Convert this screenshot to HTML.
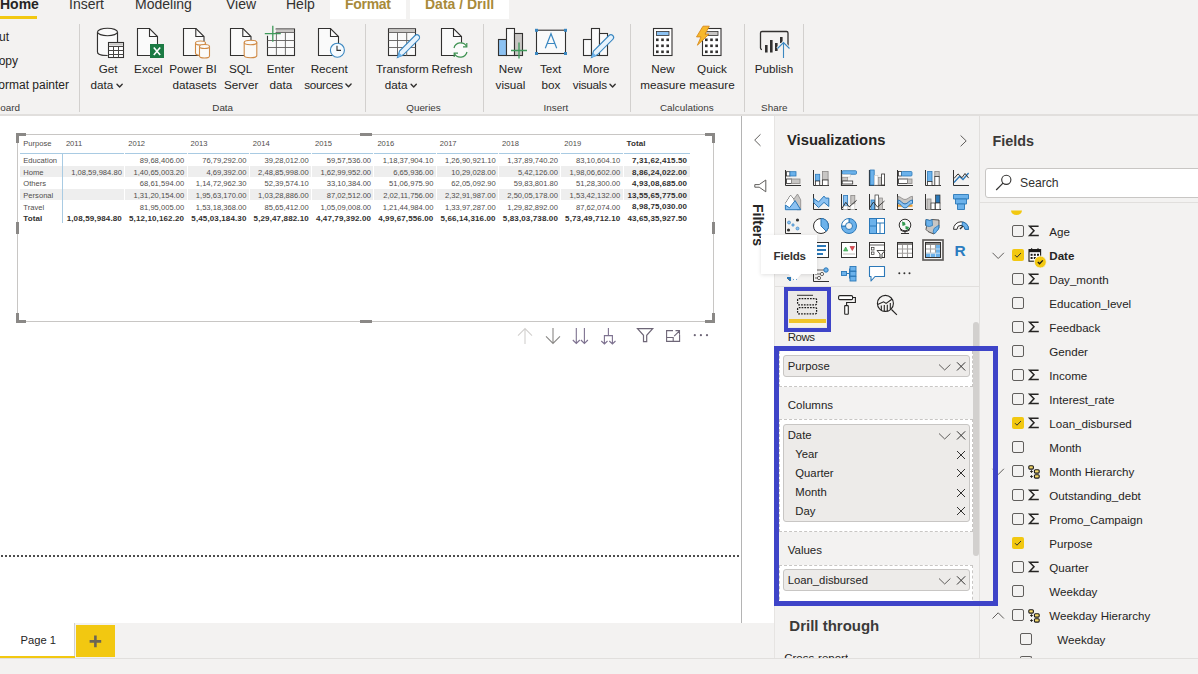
<!DOCTYPE html>
<html><head><meta charset="utf-8">
<style>
*{margin:0;padding:0;box-sizing:border-box}
html,body{width:1198px;height:674px;overflow:hidden}
body{background:#f3f2f1;font-family:"Liberation Sans",sans-serif;color:#252423;position:relative}
.a{position:absolute;white-space:nowrap;line-height:1}
.tab{font-size:14px;top:-2.9px;color:#323130}
.rl{font-size:11.7px;color:#252423;text-align:center}
.gl{font-size:9.9px;color:#3b3a39;text-align:center}
.sep{position:absolute;width:1px;background:#d2d0ce;top:24px;height:88px}
svg{position:absolute;overflow:visible}
.tt{font-size:7.6px;color:#4f4d4b}
.tb{font-size:8px;font-weight:bold;color:#323130;letter-spacing:0.13px}
.fl{font-size:11.6px;color:#252423}
.pl{font-size:11.3px;color:#252423}
.sl{font-size:11.5px;color:#252423}
</style></head><body>

<!-- ===== Tab bar ===== -->
<div class="a" style="left:330px;top:0;width:76px;height:19px;background:#fff"></div>
<div class="a" style="left:410px;top:0;width:99px;height:19px;background:#fff"></div>
<div class="a tab" style="left:0;font-weight:bold;color:#252423">Home</div>
<div class="a" style="left:0;top:16px;width:37px;height:3px;background:#f2c811"></div>
<div class="a tab" style="left:69px">Insert</div>
<div class="a tab" style="left:135px">Modeling</div>
<div class="a tab" style="left:226px">View</div>
<div class="a tab" style="left:286px">Help</div>
<div class="a tab" style="left:345px;color:#a88a3a;font-weight:bold;letter-spacing:-0.3px">Format</div>
<div class="a tab" style="left:425px;color:#a88a3a;font-weight:bold">Data / Drill</div>

<!-- ===== Ribbon ===== -->
<div class="a" style="left:0;top:114px;width:1198px;height:2px;background:#e1dfdd"></div>
<div class="sep" style="left:79px"></div>
<div class="sep" style="left:365px"></div>
<div class="sep" style="left:483px"></div>
<div class="sep" style="left:630px"></div>
<div class="sep" style="left:744px"></div>
<div class="sep" style="left:803px"></div>


<!-- ribbon labels -->
<div class="a rl" style="left:-91px;width:100px;top:31px;text-align:right;font-size:12px">ut</div>
<div class="a rl" style="left:-82px;width:100px;top:54.5px;text-align:right;font-size:12px">opy</div>
<div class="a rl" style="left:-31px;width:100px;top:78.5px;text-align:right;font-size:12px">ormat painter</div>
<div class="a gl" style="left:-80px;width:100px;top:102.9px;text-align:right">oard</div>

<div class="a rl" style="left:58.2px;width:100px;top:63px">Get</div>
<div class="a rl" style="left:0;width:113.3px;top:78.8px;text-align:right">data</div>
<div class="a rl" style="left:98.4px;width:100px;top:63px">Excel</div>
<div class="a rl" style="left:143px;width:100px;top:63px">Power BI</div>
<div class="a rl" style="left:144.5px;width:100px;top:78.8px">datasets</div>
<div class="a rl" style="left:190.7px;width:100px;top:63px">SQL</div>
<div class="a rl" style="left:191.1px;width:100px;top:78.8px">Server</div>
<div class="a rl" style="left:230.8px;width:100px;top:63px">Enter</div>
<div class="a rl" style="left:230.8px;width:100px;top:78.8px">data</div>
<div class="a rl" style="left:279.2px;width:100px;top:63px">Recent</div>
<div class="a rl" style="left:242.8px;width:100px;top:78.8px;text-align:right;letter-spacing:-0.35px">sources</div>
<div class="a gl" style="left:172.7px;width:100px;top:102.7px">Data</div>

<div class="a rl" style="left:352.3px;width:100px;top:63px">Transform</div>
<div class="a rl" style="left:307.5px;width:100px;top:78.8px;text-align:right">data</div>
<div class="a rl" style="left:402px;width:100px;top:63px">Refresh</div>
<div class="a gl" style="left:373.5px;width:100px;top:102.7px">Queries</div>

<div class="a rl" style="left:460.5px;width:100px;top:63px">New</div>
<div class="a rl" style="left:460.5px;width:100px;top:78.8px">visual</div>
<div class="a rl" style="left:500.6px;width:100px;top:63px">Text</div>
<div class="a rl" style="left:500.9px;width:100px;top:78.8px">box</div>
<div class="a rl" style="left:546.3px;width:100px;top:63px">More</div>
<div class="a rl" style="left:506.8px;width:100px;top:78.8px;text-align:right;letter-spacing:-0.25px">visuals</div>
<div class="a gl" style="left:505.9px;width:100px;top:102.7px">Insert</div>

<div class="a rl" style="left:613px;width:100px;top:63px">New</div>
<div class="a rl" style="left:613px;width:100px;top:78.8px">measure</div>
<div class="a rl" style="left:662px;width:100px;top:63px">Quick</div>
<div class="a rl" style="left:662px;width:100px;top:78.8px">measure</div>
<div class="a gl" style="left:636.9px;width:100px;top:102.7px">Calculations</div>

<div class="a rl" style="left:724px;width:100px;top:63px">Publish</div>
<div class="a gl" style="left:724.3px;width:100px;top:102.7px">Share</div>

<svg width="1198" height="120" style="left:0;top:0" viewBox="0 0 1198 120">
<g fill="none" stroke="#323130" stroke-width="1.4" stroke-linecap="round" stroke-linejoin="round">
<path d="M117 84.3l2.6 2.7 2.6-2.7"/>
<path d="M411.1 84.3l2.6 2.7 2.6-2.7"/>
<path d="M345.9 84.1l2.6 2.7 2.6-2.7"/>
<path d="M610 84.3l2.6 2.7 2.6-2.7"/>
</g>
<!-- Get data -->
<g stroke="#323130" stroke-width="1.1">
<path d="M97.5 32v20c0 2.5 4 3.5 10 3.5M117.5 32v10" fill="none"/>
<path d="M97.5 32v20c0 2.3 4.5 3.5 10.5 3.5h0V42h9.5V32z" fill="#fafafa" stroke="none"/>
<path d="M97.5 32v20c0 2.5 4 3.5 10 3.5M117.5 32v10" fill="none"/>
<ellipse cx="107.5" cy="32" rx="10" ry="3.7" fill="#fafafa"/>
<rect x="108.5" y="42.5" width="15" height="15" fill="#fff"/>
<rect x="109.2" y="43.2" width="13.6" height="2.3" fill="#c8c6c4" stroke="none"/>
<path d="M108.5 46.5h15M108.5 50.5h15M108.5 54.5h15M113.5 46v11.5M118.5 46v11.5" stroke="#484644" stroke-width="1"/>
</g>
<!-- Excel -->
<path d="M137.5 28.5h12l8 8v19h-20z" fill="#fafafa" stroke="#323130" stroke-width="1.1"/>
<path d="M149.5 28.5v8h8" fill="none" stroke="#323130" stroke-width="1.1"/>
<rect x="150" y="44" width="14" height="14" fill="#1b7a43"/>
<path d="M153.8 47.5l6.4 7.5M160.2 47.5l-6.4 7.5" stroke="#fff" stroke-width="1.6"/>
<!-- Power BI datasets -->
<path d="M183.5 28.5h12.5l8 8v19h-20.5z" fill="#fafafa" stroke="#323130" stroke-width="1.1"/>
<path d="M195.8 28.5v8h8" fill="none" stroke="#323130" stroke-width="1.1"/>
<g stroke="#d08a45" stroke-width="1.1" fill="#fbfaf8">
<path d="M195.5 43v10c0 1.5 2.3 2.3 5 2.3s5-.8 5-2.3V43"/>
<ellipse cx="200.5" cy="43" rx="5" ry="2"/>
<path d="M199.5 46.5v9.5c0 1.5 2.3 2 5 2s5-.5 5-2v-9.5"/>
<ellipse cx="204.5" cy="46.5" rx="5" ry="2"/>
</g>
<!-- SQL -->
<path d="M230.5 28.5h12.5l8 8v19h-20.5z" fill="#fafafa" stroke="#323130" stroke-width="1.1"/>
<path d="M242.8 28.5v8h8" fill="none" stroke="#323130" stroke-width="1.1"/>
<g stroke="#d08a45" stroke-width="1.1" fill="#fbfaf8">
<path d="M244.2 42.5v13c0 1.5 2.9 2.2 6.3 2.2s6.3-.7 6.3-2.2v-13"/>
<ellipse cx="250.5" cy="42.5" rx="6.3" ry="2.2"/>
</g>
<!-- Enter data -->
<rect x="267.5" y="29" width="27" height="26.5" fill="#fafafa" stroke="#323130" stroke-width="1.1"/>
<rect x="276" y="29.6" width="18" height="2.6" fill="#c8c6c4"/>
<path d="M267.5 32.5h27M267.5 40.5h27M267.5 47.5h27M276.4 32.5v23M285.4 32.5v23" stroke="#605e5c" stroke-width="0.9"/>
<rect x="264" y="25" width="11.6" height="10.8" fill="#f3f2f1"/><path d="M264.8 33.6h16M272.8 25.8v16" stroke="#3e9a5a" stroke-width="1.3"/>
<!-- Recent -->
<path d="M318.5 28.5h12l8 8v19h-20z" fill="#fafafa" stroke="#323130" stroke-width="1.1"/>
<path d="M330.5 28.5v8h8" fill="none" stroke="#323130" stroke-width="1.1"/>
<circle cx="337.4" cy="50.2" r="7" fill="#f6fbff" stroke="#3a87c0" stroke-width="1.1"/>
<path d="M337 45.8v4.6h4" fill="none" stroke="#323130" stroke-width="1.1"/>
<!-- Transform -->
<rect x="388.5" y="28.8" width="27" height="26.7" fill="#fafafa" stroke="#323130" stroke-width="1.1"/>
<rect x="389" y="29.3" width="26" height="3.2" fill="#c8c6c4"/>
<path d="M388.5 32.5h27M388.5 40.5h27M388.5 47.5h27M397.5 32.8v23M406.7 32.8v23" stroke="#605e5c" stroke-width="0.9"/>
<path d="M397.5 57.5l2-6.5 15.5-15.5c1-1 2.8-1 3.8 0s1 2.8 0 3.8L403.3 54.8z" fill="#e6f3fd" stroke="#3a87c0" stroke-width="1.1"/>
<path d="M397.5 57.5l1.5-5 3.5 3.5z" fill="#6cb2ea"/>
<!-- Refresh -->
<path d="M441.5 28.5h12l8 8v19h-20z" fill="#fafafa" stroke="#323130" stroke-width="1.1"/>
<path d="M453.5 28.5v8h8" fill="none" stroke="#323130" stroke-width="1.1"/>
<circle cx="460.5" cy="50" r="7.5" fill="#fafafa" stroke="none"/>
<path d="M454 48a6.8 6.8 0 0 1 12.6-1.5M467 52a6.8 6.8 0 0 1-12.6 1.5" fill="none" stroke="#3c9150" stroke-width="1.2"/>
<path d="M466.8 43v3.8h-3.8M454.2 57v-3.8h3.8" fill="none" stroke="#3c9150" stroke-width="1.2"/>
<!-- New visual -->
<rect x="498.5" y="39.5" width="8" height="16" fill="#8cc2f2" stroke="#323130" stroke-width="1.1"/>
<rect x="506.5" y="28.5" width="8" height="27" fill="#fafafa" stroke="#323130" stroke-width="1.1"/>
<rect x="514.5" y="33.5" width="8" height="22" fill="#c8c6c4" stroke="#323130" stroke-width="1.1"/>
<rect x="512" y="42" width="14" height="16" fill="#f3f2f1" opacity="0"/>
<path d="M511 50.5h16M519 42.5v16" stroke="#3e9a5a" stroke-width="1.3"/>
<!-- Text box -->
<rect x="536.5" y="30.2" width="29" height="23.3" fill="#fafafa" stroke="#323130" stroke-width="1.1"/>
<g fill="#3a87c0"><rect x="535" y="28.8" width="3" height="3"/><rect x="564" y="28.8" width="3" height="3"/><rect x="535" y="52" width="3" height="3"/><rect x="564" y="52" width="3" height="3"/></g>
<path d="M545.3 48.3l5.7-14.6 5.7 14.6M547.3 43.5h7.4" fill="none" stroke="#3a87c0" stroke-width="1.2"/>
<!-- More visuals -->
<rect x="583.5" y="39.5" width="8" height="16" fill="#fafafa" stroke="#323130" stroke-width="1.1"/>
<rect x="591.5" y="28.5" width="8" height="27" fill="#fafafa" stroke="#323130" stroke-width="1.1"/>
<rect x="599.5" y="33.5" width="8" height="22" fill="#fafafa" stroke="#323130" stroke-width="1.1"/>
<path d="M591.5 57.5l2-6.5 15.5-15.5c1-1 2.8-1 3.8 0s1 2.8 0 3.8L597.3 54.8z" fill="#e6f3fd" stroke="#3a87c0" stroke-width="1.1"/>
<path d="M591.5 57.5l1.5-5 3.5 3.5z" fill="#6cb2ea"/>
<!-- New measure -->
<rect x="653.5" y="28.5" width="18.5" height="27" fill="#fff" stroke="#323130" stroke-width="1.1"/>
<rect x="656.5" y="31.5" width="12.5" height="4" fill="#8cc2f2" stroke="#323130" stroke-width="0.8"/>
<g fill="#323130">
<rect x="656" y="38.5" width="2.6" height="2.6"/><rect x="661.2" y="38.5" width="2.6" height="2.6"/><rect x="666.4" y="38.5" width="2.6" height="2.6"/>
<rect x="656" y="44.5" width="2.6" height="2.6"/><rect x="661.2" y="44.5" width="2.6" height="2.6"/><rect x="666.4" y="44.5" width="2.6" height="2.6"/>
<rect x="656" y="50.5" width="2.6" height="2.6"/><rect x="661.2" y="50.5" width="2.6" height="2.6"/><rect x="666.4" y="50.5" width="2.6" height="2.6"/>
</g>
<!-- Quick measure -->
<rect x="702.5" y="28.5" width="18.5" height="27" fill="#fff" stroke="#323130" stroke-width="1.1"/>
<rect x="705.5" y="31.5" width="12.5" height="4" fill="#c8c6c4" stroke="#323130" stroke-width="0.8"/>
<g fill="#323130">
<rect x="705" y="38.5" width="2.6" height="2.6"/><rect x="710.2" y="38.5" width="2.6" height="2.6"/><rect x="715.4" y="38.5" width="2.6" height="2.6"/>
<rect x="705" y="44.5" width="2.6" height="2.6"/><rect x="710.2" y="44.5" width="2.6" height="2.6"/><rect x="715.4" y="44.5" width="2.6" height="2.6"/>
<rect x="705" y="50.5" width="2.6" height="2.6"/><rect x="710.2" y="50.5" width="2.6" height="2.6"/><rect x="715.4" y="50.5" width="2.6" height="2.6"/>
</g>
<path d="M703 26.2h6.3l-4.3 8h4l-11.6 11 3.6-8.3h-4.5z" fill="#f7b82a" stroke="#d88a1a" stroke-width="0.9" stroke-linejoin="round"/>
<!-- Publish -->
<path d="M762 49.5c-1 0-1.5-.5-1.5-1.5V33c0-1 .5-1.5 1.5-1.5h24.5c1 0 1.5.5 1.5 1.5v15" fill="none" stroke="#323130" stroke-width="1.3"/>
<g fill="#323130"><rect x="765" y="45" width="2.6" height="7.5"/><rect x="770" y="40" width="2.6" height="12.5"/><rect x="775" y="43" width="2.6" height="8"/><rect x="780" y="37" width="2.6" height="6"/></g>
<path d="M783.5 58V42.5M777.5 48.5l6-6 6 6" fill="none" stroke="#f3f2f1" stroke-width="3"/>
<path d="M783.5 58V42.5M777.5 48.5l6-6 6 6" fill="none" stroke="#3a87c0" stroke-width="1.1"/>
</svg>


<!-- ===== Canvas ===== -->
<div class="a" style="left:0;top:116px;width:741px;height:507px;background:#fff"></div>
<div class="a" style="left:741px;top:116px;width:1px;height:507px;background:#c8c6c4"></div>
<div class="a" style="left:742px;top:116px;width:32px;height:507px;background:#fff"></div>
<div class="a" style="left:0;top:555px;width:739px;height:2px;border-top:2px dotted #444"></div>


<!-- ===== Canvas ===== -->
<div class="a" style="left:0;top:116px;width:741px;height:507px;background:#fff"></div>
<div class="a" style="left:741px;top:116px;width:1px;height:507px;background:#b4b4b4"></div>
<div class="a" style="left:742px;top:116px;width:32px;height:507px;background:#fff"></div>
<div class="a" style="left:1px;top:555px;width:738px;height:2px;background:repeating-linear-gradient(90deg,#4d4d4d 0 2px,transparent 2px 4px)"></div>
<!-- ===== table visual ===== -->
<div class="a" style="left:20px;top:166px;width:670px;height:11px;background:#eeeeee"></div>
<div class="a" style="left:62px;top:166px;width:1px;height:11px;background:#fff"></div>
<div class="a" style="left:124px;top:166px;width:1px;height:11px;background:#fff"></div>
<div class="a" style="left:187px;top:166px;width:1px;height:11px;background:#fff"></div>
<div class="a" style="left:249px;top:166px;width:1px;height:11px;background:#fff"></div>
<div class="a" style="left:311px;top:166px;width:1px;height:11px;background:#fff"></div>
<div class="a" style="left:373px;top:166px;width:1px;height:11px;background:#fff"></div>
<div class="a" style="left:436px;top:166px;width:1px;height:11px;background:#fff"></div>
<div class="a" style="left:498px;top:166px;width:1px;height:11px;background:#fff"></div>
<div class="a" style="left:560px;top:166px;width:1px;height:11px;background:#fff"></div>
<div class="a" style="left:623px;top:166px;width:1px;height:11px;background:#fff"></div>
<div class="a" style="left:20px;top:189px;width:670px;height:11px;background:#eeeeee"></div>
<div class="a" style="left:62px;top:189px;width:1px;height:11px;background:#fff"></div>
<div class="a" style="left:124px;top:189px;width:1px;height:11px;background:#fff"></div>
<div class="a" style="left:187px;top:189px;width:1px;height:11px;background:#fff"></div>
<div class="a" style="left:249px;top:189px;width:1px;height:11px;background:#fff"></div>
<div class="a" style="left:311px;top:189px;width:1px;height:11px;background:#fff"></div>
<div class="a" style="left:373px;top:189px;width:1px;height:11px;background:#fff"></div>
<div class="a" style="left:436px;top:189px;width:1px;height:11px;background:#fff"></div>
<div class="a" style="left:498px;top:189px;width:1px;height:11px;background:#fff"></div>
<div class="a" style="left:560px;top:189px;width:1px;height:11px;background:#fff"></div>
<div class="a" style="left:623px;top:189px;width:1px;height:11px;background:#fff"></div>
<div class="a" style="left:20px;top:153px;width:670px;height:1px;background:#a9cbe3"></div>
<div class="a" style="left:124px;top:153px;width:1px;height:1px;background:#fff"></div>
<div class="a" style="left:187px;top:153px;width:1px;height:1px;background:#fff"></div>
<div class="a" style="left:249px;top:153px;width:1px;height:1px;background:#fff"></div>
<div class="a" style="left:311px;top:153px;width:1px;height:1px;background:#fff"></div>
<div class="a" style="left:373px;top:153px;width:1px;height:1px;background:#fff"></div>
<div class="a" style="left:436px;top:153px;width:1px;height:1px;background:#fff"></div>
<div class="a" style="left:498px;top:153px;width:1px;height:1px;background:#fff"></div>
<div class="a" style="left:560px;top:153px;width:1px;height:1px;background:#fff"></div>
<div class="a" style="left:623px;top:153px;width:1px;height:1px;background:#fff"></div>
<div class="a" style="left:62px;top:153px;width:1px;height:70px;background:#a9cbe3"></div>
<div class="a tt" style="left:23.3px;top:140.07px">Purpose</div>
<div class="a tt" style="left:65.9px;top:140.07px">2011</div>
<div class="a tt" style="left:128.2px;top:140.07px">2012</div>
<div class="a tt" style="left:190.5px;top:140.07px">2013</div>
<div class="a tt" style="left:252.8px;top:140.07px">2014</div>
<div class="a tt" style="left:315.1px;top:140.07px">2015</div>
<div class="a tt" style="left:377.4px;top:140.07px">2016</div>
<div class="a tt" style="left:439.7px;top:140.07px">2017</div>
<div class="a tt" style="left:502.0px;top:140.07px">2018</div>
<div class="a tt" style="left:564.3px;top:140.07px">2019</div>
<div class="a tb" style="left:626.5px;top:139.73px">Total</div>
<div class="a tt" style="left:23.3px;top:157.17px">Education</div>
<div class="a tt" style="left:84.2px;width:100px;text-align:right;top:157.17px">89,68,406.00</div>
<div class="a tt" style="left:146.5px;width:100px;text-align:right;top:157.17px">76,79,292.00</div>
<div class="a tt" style="left:208.8px;width:100px;text-align:right;top:157.17px">39,28,012.00</div>
<div class="a tt" style="left:271.1px;width:100px;text-align:right;top:157.17px">59,57,536.00</div>
<div class="a tt" style="left:333.4px;width:100px;text-align:right;top:157.17px">1,18,37,904.10</div>
<div class="a tt" style="left:395.7px;width:100px;text-align:right;top:157.17px">1,26,90,921.10</div>
<div class="a tt" style="left:458.0px;width:100px;text-align:right;top:157.17px">1,37,89,740.20</div>
<div class="a tt" style="left:520.3px;width:100px;text-align:right;top:157.17px">83,10,604.10</div>
<div class="a tb" style="left:587.2px;width:100px;text-align:right;top:156.83px">7,31,62,415.50</div>
<div class="a tt" style="left:23.3px;top:168.97px">Home</div>
<div class="a tt" style="left:21.9px;width:100px;text-align:right;top:168.97px">1,08,59,984.80</div>
<div class="a tt" style="left:84.2px;width:100px;text-align:right;top:168.97px">1,40,65,003.20</div>
<div class="a tt" style="left:146.5px;width:100px;text-align:right;top:168.97px">4,69,392.00</div>
<div class="a tt" style="left:208.8px;width:100px;text-align:right;top:168.97px">2,48,85,998.00</div>
<div class="a tt" style="left:271.1px;width:100px;text-align:right;top:168.97px">1,62,99,952.00</div>
<div class="a tt" style="left:333.4px;width:100px;text-align:right;top:168.97px">6,65,936.00</div>
<div class="a tt" style="left:395.7px;width:100px;text-align:right;top:168.97px">10,29,028.00</div>
<div class="a tt" style="left:458.0px;width:100px;text-align:right;top:168.97px">5,42,126.00</div>
<div class="a tt" style="left:520.3px;width:100px;text-align:right;top:168.97px">1,98,06,602.00</div>
<div class="a tb" style="left:587.2px;width:100px;text-align:right;top:168.63px">8,86,24,022.00</div>
<div class="a tt" style="left:23.3px;top:179.97px">Others</div>
<div class="a tt" style="left:84.2px;width:100px;text-align:right;top:179.97px">68,61,594.00</div>
<div class="a tt" style="left:146.5px;width:100px;text-align:right;top:179.97px">1,14,72,962.30</div>
<div class="a tt" style="left:208.8px;width:100px;text-align:right;top:179.97px">52,39,574.10</div>
<div class="a tt" style="left:271.1px;width:100px;text-align:right;top:179.97px">33,10,384.00</div>
<div class="a tt" style="left:333.4px;width:100px;text-align:right;top:179.97px">51,06,975.90</div>
<div class="a tt" style="left:395.7px;width:100px;text-align:right;top:179.97px">62,05,092.90</div>
<div class="a tt" style="left:458.0px;width:100px;text-align:right;top:179.97px">59,83,801.80</div>
<div class="a tt" style="left:520.3px;width:100px;text-align:right;top:179.97px">51,28,300.00</div>
<div class="a tb" style="left:587.2px;width:100px;text-align:right;top:179.63px">4,93,08,685.00</div>
<div class="a tt" style="left:23.3px;top:191.87px">Personal</div>
<div class="a tt" style="left:84.2px;width:100px;text-align:right;top:191.87px">1,31,20,154.00</div>
<div class="a tt" style="left:146.5px;width:100px;text-align:right;top:191.87px">1,95,63,170.00</div>
<div class="a tt" style="left:208.8px;width:100px;text-align:right;top:191.87px">1,03,28,886.00</div>
<div class="a tt" style="left:271.1px;width:100px;text-align:right;top:191.87px">87,02,512.00</div>
<div class="a tt" style="left:333.4px;width:100px;text-align:right;top:191.87px">2,02,11,756.00</div>
<div class="a tt" style="left:395.7px;width:100px;text-align:right;top:191.87px">2,32,91,987.00</div>
<div class="a tt" style="left:458.0px;width:100px;text-align:right;top:191.87px">2,50,05,178.00</div>
<div class="a tt" style="left:520.3px;width:100px;text-align:right;top:191.87px">1,53,42,132.00</div>
<div class="a tb" style="left:587.2px;width:100px;text-align:right;top:191.53px">13,55,65,775.00</div>
<div class="a tt" style="left:23.3px;top:203.77px">Travel</div>
<div class="a tt" style="left:84.2px;width:100px;text-align:right;top:203.77px">81,95,005.00</div>
<div class="a tt" style="left:146.5px;width:100px;text-align:right;top:203.77px">1,53,18,368.00</div>
<div class="a tt" style="left:208.8px;width:100px;text-align:right;top:203.77px">85,65,412.00</div>
<div class="a tt" style="left:271.1px;width:100px;text-align:right;top:203.77px">1,05,09,008.00</div>
<div class="a tt" style="left:333.4px;width:100px;text-align:right;top:203.77px">1,21,44,984.00</div>
<div class="a tt" style="left:395.7px;width:100px;text-align:right;top:203.77px">1,33,97,287.00</div>
<div class="a tt" style="left:458.0px;width:100px;text-align:right;top:203.77px">1,29,82,892.00</div>
<div class="a tt" style="left:520.3px;width:100px;text-align:right;top:203.77px">87,62,074.00</div>
<div class="a tb" style="left:587.2px;width:100px;text-align:right;top:203.43px">8,98,75,030.00</div>
<div class="a tb" style="left:23.3px;top:215.33px">Total</div>
<div class="a tb" style="left:21.9px;width:100px;text-align:right;top:215.33px">1,08,59,984.80</div>
<div class="a tb" style="left:84.2px;width:100px;text-align:right;top:215.33px">5,12,10,162.20</div>
<div class="a tb" style="left:146.5px;width:100px;text-align:right;top:215.33px">5,45,03,184.30</div>
<div class="a tb" style="left:208.8px;width:100px;text-align:right;top:215.33px">5,29,47,882.10</div>
<div class="a tb" style="left:271.1px;width:100px;text-align:right;top:215.33px">4,47,79,392.00</div>
<div class="a tb" style="left:333.4px;width:100px;text-align:right;top:215.33px">4,99,67,556.00</div>
<div class="a tb" style="left:395.7px;width:100px;text-align:right;top:215.33px">5,66,14,316.00</div>
<div class="a tb" style="left:458.0px;width:100px;text-align:right;top:215.33px">5,83,03,738.00</div>
<div class="a tb" style="left:520.3px;width:100px;text-align:right;top:215.33px">5,73,49,712.10</div>
<div class="a tb" style="left:587.2px;width:100px;text-align:right;top:215.33px">43,65,35,927.50</div>
<div class="a" style="left:17px;top:134px;width:697px;height:188px;border:1px solid #c8c6c4"></div>
<div class="a" style="left:16px;top:133px;width:10px;height:3px;background:#8a8886"></div>
<div class="a" style="left:16px;top:133px;width:3px;height:10px;background:#8a8886"></div>
<div class="a" style="left:705px;top:133px;width:10px;height:3px;background:#8a8886"></div>
<div class="a" style="left:712px;top:133px;width:3px;height:10px;background:#8a8886"></div>
<div class="a" style="left:16px;top:313px;width:3px;height:10px;background:#8a8886"></div>
<div class="a" style="left:16px;top:320px;width:10px;height:3px;background:#8a8886"></div>
<div class="a" style="left:705px;top:320px;width:10px;height:3px;background:#8a8886"></div>
<div class="a" style="left:712px;top:313px;width:3px;height:10px;background:#8a8886"></div>
<div class="a" style="left:360px;top:133px;width:12px;height:3px;background:#8a8886"></div>
<div class="a" style="left:360px;top:320px;width:12px;height:3px;background:#8a8886"></div>
<div class="a" style="left:16px;top:222px;width:3px;height:12px;background:#8a8886"></div>
<div class="a" style="left:712px;top:222px;width:3px;height:12px;background:#8a8886"></div>
<svg width="1198" height="674" style="left:0;top:0" viewBox="0 0 1198 674">
<g fill="none" stroke-width="1.1">
<path d="M525 344V328.6M518 335.6l7-7 7 7" stroke="#d2d0ce"/>
<path d="M553 328v15.4M546 336.4l7 7 7-7" stroke="#8a8886"/>
<path d="M576.3 328v15.4M584.4 328v15.4M572.8 340l3.5 3.5 3.5-3.5M580.9 340l3.5 3.5 3.5-3.5" stroke="#7e7290"/>
<path d="M608.4 328v7.6M604.4 344v-8.4h8v8.4M601.3 341l3.1 3 3.1-3M609.3 341l3.1 3 3.1-3" stroke="#7e7290"/>
<path d="M637.5 328.7h15.2l-6 6.6v6.3h-3.2v-6.3z" stroke="#6e6677" stroke-width="1.2"/>
<path d="M673 330.6h-6.4v10.8h13v-6.6M666.6 337.5h6.6v4M674.2 336.2l5.3-5.3M675.5 330.6h4v4" stroke="#6e6677" stroke-width="1.1"/>
</g>
<g fill="#6e6677"><circle cx="694.8" cy="335.2" r="1.1"/><circle cx="700.9" cy="335.2" r="1.1"/><circle cx="707" cy="335.2" r="1.1"/></g>
</svg>
<!-- ===== Panes ===== -->
<div class="a" style="left:774px;top:116px;width:1px;height:542px;background:#e6e4e2"></div>
<div class="a" style="left:979px;top:116px;width:1px;height:542px;background:#e1dfdd"></div>
<svg width="30" height="80" style="left:745px;top:125px" viewBox="745 125 30 80"><path d="M760.5 134.3l-5.8 5.8 5.8 5.8" fill="none" stroke="#605e5c" stroke-width="1"/><path d="M765.8 180v11.8l-6.6-4.6h-4.4v-2.6h4.4z" fill="none" stroke="#605e5c" stroke-width="1" stroke-linejoin="round"/></svg>
<div class="a" style="left:764.6px;top:203.6px;font-size:14px;font-weight:bold;color:#252423;transform-origin:0 0;transform:rotate(90deg)">Filters</div>
<div class="a" style="left:787px;top:133.47px;font-size:14.8px;font-weight:bold;color:#252423">Visualizations</div>
<svg width="10" height="14" style="left:958px;top:134px" viewBox="958 134 10 14"><path d="M960.6 135.5l5.6 5.4-5.6 5.4" fill="none" stroke="#605e5c" stroke-width="1"/></svg>
<svg width="1198" height="674" style="left:0;top:0" viewBox="0 0 1198 674">
<g transform="translate(785,170)"><path d="M.5 0v15.5H16" fill="none" stroke="#323130"/><rect x="1.5" y="1.7" width="3.5" height="4.3" fill="#fff" stroke="#323130" stroke-width=".8"/><rect x="5" y="1.7" width="6" height="4.3" fill="#6cb2eb" stroke="#2b78b8" stroke-width=".8"/><rect x="1.5" y="9" width="5" height="4.5" fill="#fff" stroke="#323130" stroke-width=".8"/><rect x="6.5" y="9" width="8.5" height="4.5" fill="#c8c6c4" stroke="#8a8886" stroke-width=".8"/></g>
<g transform="translate(813,170)"><path d="M.5 0v15.5H16" fill="none" stroke="#323130"/><rect x="2.5" y="4.3" width="4.2" height="6.7" fill="#6cb2eb" stroke="#2b78b8" stroke-width=".8"/><rect x="2.5" y="11" width="4.2" height="4.5" fill="#fff" stroke="#323130" stroke-width=".8"/><rect x="9.4" y="1.5" width="5.7" height="8.5" fill="#c8c6c4" stroke="#8a8886" stroke-width=".8"/><rect x="9.4" y="10" width="5.7" height="5.5" fill="#fff" stroke="#323130" stroke-width=".8"/></g>
<g transform="translate(841,170)"><path d="M.5 0v15.5H16" fill="none" stroke="#323130" stroke-width="1.2"/><rect x="1.2" y=".7" width="14.3" height="3.6" rx="1" fill="#6cb2eb" stroke="#2b78b8" stroke-width=".8"/><rect x="1.2" y="4.5" width="8" height="2.5" fill="#fff" stroke="#c8c6c4" stroke-width=".6"/><rect x="1.2" y="7.5" width="5.5" height="3" fill="#c8c6c4" stroke="#8a8886" stroke-width=".6"/><rect x="1.2" y="11" width="10.5" height="3" fill="#fff" stroke="#323130" stroke-width=".8"/></g>
<g transform="translate(869,170)"><path d="M.5 0v15.5H16" fill="none" stroke="#323130" stroke-width="1.2"/><rect x="1.2" y="0" width="4" height="15" fill="#6cb2eb" stroke="#2b78b8" stroke-width=".8"/><rect x="5.4" y="5.5" width="3.5" height="9.5" fill="#fff" stroke="#c8c6c4" stroke-width=".6"/><rect x="9.4" y="7.5" width="3" height="7.5" fill="#c8c6c4" stroke="#8a8886" stroke-width=".6"/><rect x="12.6" y="4" width="3" height="11" fill="#fff" stroke="#323130" stroke-width=".8"/></g>
<g transform="translate(897,170)"><path d="M.5 0v15.5H16" fill="none" stroke="#323130"/><rect x="1.5" y="1.5" width="3" height="4.5" fill="#fff" stroke="#323130" stroke-width=".8"/><rect x="4.5" y="1.5" width="10.5" height="4.5" rx="1" fill="#6cb2eb" stroke="#2b78b8" stroke-width=".8"/><rect x="1.5" y="9" width="9" height="4.5" fill="#fff" stroke="#323130" stroke-width=".8"/><rect x="10.5" y="9" width="4.5" height="4.5" fill="#c8c6c4" stroke="#8a8886" stroke-width=".8"/></g>
<g transform="translate(925,170)"><path d="M.5 0v15.5H16" fill="none" stroke="#323130"/><rect x="2.6" y="1.5" width="4.4" height="10" fill="#6cb2eb" stroke="#2b78b8" stroke-width=".8"/><rect x="2.6" y="11.5" width="4.4" height="4" fill="#fff" stroke="#323130" stroke-width=".8"/><rect x="9.8" y="1.5" width="4.4" height="5" fill="#c8c6c4" stroke="#8a8886" stroke-width=".8"/><rect x="9.8" y="6.5" width="4.4" height="9" fill="#fff" stroke="#323130" stroke-width=".8"/></g>
<g transform="translate(953,170)"><path d="M.5 0v15.5H16" fill="none" stroke="#323130"/><path d="M1 12.5l5.5-6 3.5 3 5.6-6.5" fill="none" stroke="#2b78b8" stroke-width="1.3"/><path d="M1 8.5l4-4.6 4 3.8 3-4.2 3.6 4.6" fill="none" stroke="#323130" stroke-width="1"/></g>
<g transform="translate(785,194)"><path d="M.4 9.6L5.6 1.3l4.6 5.6" fill="#fff" stroke="#323130" stroke-width="1"/><path d="M.4 9.6L5.6 1.3l4.6 5.6L4.5 13.8.4 11z" fill="#fff"/><path d="M8.8 5.2L12.5 0l3.2 5.8v9.9H12z" fill="#c8c6c4" stroke="#8a8886" stroke-width=".8"/><path d="M.4 11l4.1 2.8 5.6-7.2 5.6 9.1H.4z" fill="#8cc2f2" stroke="#2b78b8" stroke-width="1" stroke-linejoin="round"/></g>
<g transform="translate(813,194)"><path d="M.5 0v15.5H16" fill="none" stroke="#323130"/><path d="M.8 4.6l4.8 3.4L11 2.1l1.6 2h3.2v8.4L11 8.4l-5.4 5.2L.8 8.8z" fill="#8cc2f2" stroke="#2b78b8" stroke-width="1" stroke-linejoin="round"/></g>
<g transform="translate(841,194)"><path d="M.5 0v15.5H16" fill="none" stroke="#323130"/><rect x="2.6" y="1.5" width="4" height="10.5" fill="#8cc2f2" stroke="#2b78b8" stroke-width=".8"/><rect x="2.6" y="12" width="4" height="3.5" fill="#fff" stroke="#c8c6c4" stroke-width=".6"/><rect x="9.8" y="1.5" width="4" height="8.5" fill="#c8c6c4" stroke="#8a8886" stroke-width=".8"/><rect x="9.8" y="10" width="4" height="5.5" fill="#fff" stroke="#c8c6c4" stroke-width=".6"/><path d="M.8 14.5l4-6.2 3.4 4.6 7.4-6.6" fill="none" stroke="#323130" stroke-width="1"/></g>
<g transform="translate(869,194)"><path d="M.5 0v15.5H16" fill="none" stroke="#323130"/><rect x="2" y="6" width="3.5" height="9.5" fill="#6cb2eb" stroke="#2b78b8" stroke-width=".8"/><rect x="6" y="1" width="3.5" height="14.5" fill="#fff" stroke="#323130" stroke-width=".7"/><rect x="10" y="4" width="3.5" height="11.5" fill="#c8c6c4" stroke="#8a8886" stroke-width=".7"/><path d="M.5 14l4-6 4 5 7-6" fill="none" stroke="#323130" stroke-width=".9"/></g>
<g transform="translate(897,194)"><path d="M.5 0v15.5H16" fill="none" stroke="#323130"/><path d="M1 2.5c3 0 4 3 7 3s4-3 7.5-3.2v4.5c-3.5 0-4.5 3-7.5 3s-4-3-7-3z" fill="#c8c6c4" stroke="#8a8886" stroke-width=".8"/><rect x="1" y="10.5" width="14.5" height="2.3" fill="#f0a030"/><path d="M1 6c3 0 4 4 7 4s4-4 7.5-4v3.5c-3.5 0-4.5 4.5-7.5 4.5S4 9.5 1 9.5z" fill="#8cc2f2" stroke="#2b78b8" stroke-width="1"/></g>
<g transform="translate(925,194)"><path d="M.5 0v15.5H16" fill="none" stroke="#323130"/><rect x="2" y="5" width="4" height="10.5" fill="#c8c6c4" stroke="#8a8886" stroke-width=".8"/><rect x="6" y="9" width="4" height="6.5" fill="#fff" stroke="#323130" stroke-width=".7"/><rect x="10.5" y="1" width="4.5" height="8" fill="#2b78b8" stroke="#323130" stroke-width=".7"/><rect x="10.5" y="9" width="4.5" height="6.5" fill="#fff" stroke="#323130" stroke-width=".7"/></g>
<g transform="translate(953,194)"><path d="M.5 0.5h15v4.5h-15z" fill="#6cb2eb" stroke="#2b78b8" stroke-width=".9"/><path d="M2.5 5h11v5h-11z" fill="#6cb2eb" stroke="#2b78b8" stroke-width=".9"/><path d="M4.5 10h7v5.5h-7z" fill="#6cb2eb" stroke="#2b78b8" stroke-width=".9"/></g>
<g transform="translate(785,218)"><path d="M.5 0v15.5H16" fill="none" stroke="#323130"/><circle cx="4" cy="4.5" r="1.5" fill="#8cc2f2" stroke="#2b78b8" stroke-width=".6"/><circle cx="12.5" cy="2" r="1.6" fill="#323130"/><circle cx="8" cy="7" r="1.2" fill="#8cc2f2" stroke="#2b78b8" stroke-width=".6"/><circle cx="3.5" cy="12" r="1.6" fill="#323130"/><circle cx="12.5" cy="10.5" r="1.5" fill="#8cc2f2" stroke="#2b78b8" stroke-width=".6"/></g>
<g transform="translate(813,218)"><circle cx="8" cy="8" r="7.5" fill="#fff" stroke="#323130" stroke-width="1"/><path d="M8 .5A7.5 7.5 0 0 1 13.3 13.3L8 8z" fill="#6cb2eb" stroke="#2b78b8" stroke-width="1"/></g>
<g transform="translate(841,218)"><path d="M8 .5A7.5 7.5 0 1 1 .5 8H4.5A3.5 3.5 0 1 0 8 4.5z" fill="#6cb2eb" stroke="#2b78b8" stroke-width="1" stroke-linejoin="round"/><path d="M.5 8A7.5 7.5 0 0 1 8 .5V4.5A3.5 3.5 0 0 0 4.5 8z" fill="#fff" stroke="#2b78b8" stroke-width="1" stroke-linejoin="round"/></g>
<g transform="translate(869,218)"><rect x=".5" y=".5" width="15" height="15" fill="#fff" stroke="#2b78b8" stroke-width="1"/><rect x=".5" y=".5" width="7" height="15" fill="#6cb2eb" stroke="#2b78b8" stroke-width="1"/><path d="M.5 8h7M7.5 5h8M11 5v10.5" fill="none" stroke="#2b78b8" stroke-width="1"/></g>
<g transform="translate(897,218)"><circle cx="8" cy="7" r="5.8" fill="#f8f8f8" stroke="#323130" stroke-width="1"/><path d="M5 3.5l3 1 .5 2.5-3 1zM8.5 8l3.5 1-1 3-2.5-1z" fill="#2f9a4f"/><path d="M3 11.5a7 7 0 0 0 10 0M8 13v2.5M4 15.5h8" fill="none" stroke="#323130" stroke-width="1"/></g>
<g transform="translate(925,218)"><path d="M1 1.5l4 1 2-1 7 .5v8l-1.5 2-2 2-1.5 2-4-1.5-2-1-2-2 .5-3-1-1.5z" fill="#c8c6c4" stroke="#323130" stroke-width=".8"/><path d="M1 1.5l4 1 2-1 .5 6-3 1-3-.5-.5-1.5z" fill="#6cb2eb" stroke="#2b78b8" stroke-width=".8"/><path d="M14 7l-.5 4-2 2.5-1.5 2 -2-1 1-4 5-3.5z" fill="#6cb2eb" stroke="#2b78b8" stroke-width=".8"/></g>
<g transform="translate(953,218)"><path d="M.5 11.3A7.5 7.5 0 0 1 15.5 11.3H12A4 4 0 0 0 4 11.3z" fill="#fff" stroke="#323130" stroke-width="1" stroke-linejoin="round"/><path d="M9.5 4A7.5 7.5 0 0 1 15.5 11.3H12A4 4 0 0 0 9 7.5z" fill="#6cb2eb" stroke="#2b78b8" stroke-width="1" stroke-linejoin="round"/><path d="M7 11l3-3" stroke="#323130" stroke-width="1.4"/></g>
<g transform="translate(813,242)"><rect x=".5" y=".5" width="15" height="15" fill="#fff" stroke="#323130" stroke-width="1"/><path d="M3 4h10M3 8h10M3 12h7" stroke="#2b78b8" stroke-width="1.8"/></g>
<g transform="translate(841,242)"><rect x=".5" y=".5" width="15" height="15" fill="#fff" stroke="#323130" stroke-width="1"/><path d="M2.5 9l2.2-4 2.2 4z" fill="#5cc06a" stroke="#2f9a4f" stroke-width=".6"/><path d="M9 4.5h4.5l-2.2 4z" fill="#e84a50" stroke="#b03038" stroke-width=".6"/><path d="M2 12h12" stroke="#c8c6c4" stroke-width="1.2"/></g>
<g transform="translate(869,242)"><rect x=".5" y=".5" width="15" height="15" fill="#fff" stroke="#323130" stroke-width="1"/><path d="M.5 3h15" stroke="#323130" stroke-width=".8"/><rect x="2.5" y="5.5" width="2.5" height="2.5" fill="#fff" stroke="#323130" stroke-width=".7"/><rect x="2.5" y="10" width="2.5" height="2.5" fill="#fff" stroke="#323130" stroke-width=".7"/><path d="M8 8.5h8l-3 3.5v4h-2v-4z" fill="#fff" stroke="#323130" stroke-width=".9"/></g>
<g transform="translate(897,242)"><rect x=".5" y=".5" width="15" height="15" fill="#fff"/><rect x="1" y="1" width="14" height="2" fill="#8a8886"/><path d="M.5 7h15M.5 11.2h15M5.5 3v12.5M10.5 3v12.5" stroke="#a19f9d" stroke-width="1.1"/><rect x=".5" y=".5" width="15" height="15" fill="none" stroke="#323130" stroke-width="1"/></g>
<g transform="translate(925,242)"><rect x="-2" y="-2" width="20" height="20" fill="none" stroke="#605e5c" stroke-width="1.7"/><rect x=".5" y=".5" width="15" height="15" fill="#fff"/><rect x="1" y="1" width="14" height="2" fill="#8a8886"/><rect x="10.5" y="3" width="5" height="12.5" fill="#6cb2eb"/><rect x=".5" y="11.2" width="15" height="4.3" fill="#6cb2eb"/><path d="M.5 7h10M.5 11.2h10M5.5 3v8.2M10.5 3v8.2" stroke="#a19f9d" stroke-width="1.1"/><path d="M10.5 7h5M.5 11.2h15M5.5 11.2v4.3M10.5 11.2v4.3" stroke="#c7e0f4" stroke-width="1"/><rect x=".5" y=".5" width="15" height="15" fill="none" stroke="#323130" stroke-width="1"/></g>
<g transform="translate(953,242)"><text x="1.6" y="13.9" font-family="Liberation Sans" font-weight="bold" font-size="15.5" fill="#2b7cc0">R</text></g>
<g transform="translate(785,266)"><path d="M2 12h3v3M8 13h4" stroke="#2b78b8" stroke-width="2"/></g>
<g transform="translate(813,266)"><path d="M.5 0v15.5H16" fill="none" stroke="#323130"/><path d="M2 4h9M2 8h5M2 12h3" stroke="#605e5c" stroke-width="1"/><circle cx="13" cy="4" r="2.2" fill="#6cb2eb" stroke="#2b78b8"/><circle cx="9" cy="8" r="1.6" fill="#fff" stroke="#605e5c"/><circle cx="6" cy="12" r="1.6" fill="#fff" stroke="#605e5c"/></g>
<g transform="translate(841,266)"><rect x=".5" y="5.5" width="5" height="4" fill="#6cb2eb" stroke="#2b78b8" stroke-width=".9"/><path d="M5.5 7.5h3M8.5 2.5v10" stroke="#2b78b8" stroke-width="1"/><rect x="9" y=".5" width="6" height="4.5" fill="#6cb2eb" stroke="#2b78b8" stroke-width=".9"/><rect x="9" y="5.5" width="6" height="4.5" fill="#6cb2eb" stroke="#2b78b8" stroke-width=".9"/><rect x="9" y="10.5" width="6" height="4.5" fill="#6cb2eb" stroke="#2b78b8" stroke-width=".9"/></g>
<g transform="translate(869,266)"><path d="M.5 .5h15v10H6l-4 4.5v-4.5H.5z" fill="#fff" stroke="#2b78b8" stroke-width="1.1" stroke-linejoin="round"/></g>
<g transform="translate(897,266)"><circle cx="2.3" cy="7.3" r="1" fill="#323130"/><circle cx="7.4" cy="7.3" r="1" fill="#323130"/><circle cx="12.5" cy="7.3" r="1" fill="#323130"/></g>
</svg>
<div class="a" style="left:775px;top:286px;width:204px;height:1px;background:#e1dfdd"></div>
<div class="a" style="left:761px;top:235px;width:56px;height:39px;background:#fff;box-shadow:0 1px 4px rgba(0,0,0,0.12)"></div>
<svg width="20" height="10" style="left:785px;top:273px" viewBox="0 0 20 10"><path d="M3 0l7 8 7-8z" fill="#fff"/></svg>
<div class="a" style="left:773.5px;top:249.88px;font-size:11.6px;font-weight:bold;color:#323130;letter-spacing:-0.2px">Fields</div>
<div class="a" style="left:784px;top:287px;width:47px;height:45px;border:4.8px solid #3e44c8;background:#ebe9e7"></div>
<div class="a" style="left:789px;top:319px;width:37px;height:4px;background:#efc42a"></div>
<div class="a" style="left:789px;top:323px;width:37px;height:4px;background:#f7f3e6"></div>
<svg width="60" height="30" style="left:790px;top:290px" viewBox="790 290 60 30"><path d="M797 295.3h16" stroke="#323130" stroke-width="1"/><rect x="797.6" y="298.6" width="19" height="6.2" rx="1.2" fill="none" stroke="#1b1a19" stroke-width="1.25" stroke-dasharray="1.7 1.1"/><rect x="797.6" y="307.6" width="19" height="6.2" rx="1.2" fill="none" stroke="#1b1a19" stroke-width="1.25" stroke-dasharray="1.7 1.1"/></svg>
<svg width="70" height="30" style="left:835px;top:290px" viewBox="835 290 70 30"><rect x="838.6" y="295.6" width="14" height="4" rx="1.2" fill="#fff" stroke="#252423" stroke-width="1.1"/><path d="M852.6 297.5h2.8v5h-8.8v3" fill="none" stroke="#252423" stroke-width="1.1"/><rect x="844.7" y="305.6" width="3.6" height="8.6" rx=".5" fill="#fff" stroke="#252423" stroke-width="1.1"/><circle cx="885.4" cy="303.4" r="8" fill="none" stroke="#252423" stroke-width="1.1"/><path d="M877.6 304.5l6-2.7 2.5 1.6 5.8-4.2" fill="none" stroke="#252423" stroke-width="1.1"/><path d="M881.3 305.5v5M884.3 305v6.5M887.3 304.8v6.8M890.3 303v6" fill="none" stroke="#252423" stroke-width="1.1"/><path d="M891.5 309.5l5.4 5.4" stroke="#252423" stroke-width="1.1"/></svg>
<div class="a sl" style="left:787.7px;top:331.57px;letter-spacing:-0.5px">Rows</div>
<div class="a" style="left:973px;top:322px;width:6px;height:234px;background:#d2d0ce;border-radius:3px"></div>
<div class="a" style="left:779px;top:351px;width:194px;height:36px;background:#fff;border:1px dashed #c8c6c4;border-top:none"></div>
<div class="a" style="left:782.5px;top:354.5px;width:187.5px;height:22.5px;background:#edebe9;border:1px solid #c8c6c4;border-radius:3px"></div>
<div class="a pl" style="left:787.7px;top:360.73px">Purpose</div>
<svg width="40" height="14" style="left:936px;top:359.5px" viewBox="0 0 40 14"><path d="M3 4.5l5.7 5.5 5.7-5.5" fill="none" stroke="#605e5c" stroke-width="1"/><path d="M21 2.3l8.2 8.2M29.2 2.3l-8.2 8.2" fill="none" stroke="#323130" stroke-width="1"/></svg>
<div class="a sl" style="left:787.7px;top:399.57px">Columns</div>
<div class="a" style="left:779px;top:419px;width:194px;height:113px;background:#fff;border:1px dashed #c8c6c4"></div>
<div class="a" style="left:782.5px;top:423.5px;width:187.5px;height:98.5px;background:#edebe9;border:1px solid #c8c6c4;border-radius:3px"></div>
<div class="a pl" style="left:787.7px;top:429.73px">Date</div>
<svg width="40" height="14" style="left:936px;top:428.5px" viewBox="0 0 40 14"><path d="M3 4.5l5.7 5.5 5.7-5.5" fill="none" stroke="#605e5c" stroke-width="1"/><path d="M21 2.3l8.2 8.2M29.2 2.3l-8.2 8.2" fill="none" stroke="#323130" stroke-width="1"/></svg>
<div class="a pl" style="left:795.3px;top:449.23px">Year</div>
<svg width="14" height="14" style="left:955px;top:446.8px" viewBox="0 0 14 14"><path d="M2 4l8 8M10 4l-8 8" fill="none" stroke="#323130" stroke-width="1"/></svg>
<div class="a pl" style="left:795.3px;top:467.83px">Quarter</div>
<svg width="14" height="14" style="left:955px;top:465.4px" viewBox="0 0 14 14"><path d="M2 4l8 8M10 4l-8 8" fill="none" stroke="#323130" stroke-width="1"/></svg>
<div class="a pl" style="left:795.3px;top:487.03px">Month</div>
<svg width="14" height="14" style="left:955px;top:484.6px" viewBox="0 0 14 14"><path d="M2 4l8 8M10 4l-8 8" fill="none" stroke="#323130" stroke-width="1"/></svg>
<div class="a pl" style="left:795.3px;top:505.63px">Day</div>
<svg width="14" height="14" style="left:955px;top:503.20000000000005px" viewBox="0 0 14 14"><path d="M2 4l8 8M10 4l-8 8" fill="none" stroke="#323130" stroke-width="1"/></svg>
<div class="a sl" style="left:787.7px;top:544.87px">Values</div>
<div class="a" style="left:779px;top:564.5px;width:194px;height:40px;background:#fff;border:1px dashed #c8c6c4"></div>
<div class="a" style="left:782.5px;top:568.5px;width:187.5px;height:22.5px;background:#edebe9;border:1px solid #c8c6c4;border-radius:3px"></div>
<div class="a pl" style="left:787.7px;top:574.73px">Loan_disbursed</div>
<svg width="40" height="14" style="left:936px;top:573.5px" viewBox="0 0 40 14"><path d="M3 4.5l5.7 5.5 5.7-5.5" fill="none" stroke="#605e5c" stroke-width="1"/><path d="M21 2.3l8.2 8.2M29.2 2.3l-8.2 8.2" fill="none" stroke="#323130" stroke-width="1"/></svg>
<div class="a" style="left:789.3px;top:618.20px;font-size:15px;font-weight:bold;color:#3b3a39">Drill through</div>
<div class="a" style="left:784.2px;top:651.5px;font-size:11.5px;color:#252423;height:6.5px;overflow:hidden;line-height:1.1">Cross-report</div>
<div class="a" style="left:992.5px;top:134.01px;font-size:14.4px;font-weight:bold;color:#3b3a39">Fields</div>
<div class="a" style="left:984.5px;top:168px;width:230px;height:29.5px;background:#fff;border:1px solid #c8c6c4;border-radius:3px"></div>
<svg width="20" height="20" style="left:993px;top:173px" viewBox="993 173 20 20"><circle cx="1006.3" cy="179.8" r="4.6" fill="none" stroke="#323130" stroke-width="1.1"/><path d="M1003 183.2l-6.8 6.8" stroke="#323130" stroke-width="1.2"/></svg>
<div class="a" style="left:1020px;top:177.37px;font-size:12.2px;color:#323130">Search</div>
<div class="a" style="left:980px;top:202px;width:218px;height:1px;background:#e1dfdd"></div>
<svg width="14" height="6" style="left:1010px;top:210px" viewBox="0 0 14 6"><path d="M1 .5h11a5.5 4.5 0 0 1-11 0z" fill="#f2c811"/></svg>
<div class="a" style="left:1012px;top:225px;width:12px;height:12px;border:1px solid #605e5c;border-radius:2px"></div>
<svg width="12" height="12" style="left:1028px;top:225px" viewBox="0 0 12 12"><path d="M10.6 1.2H1.6l4.4 4.6-4.4 4.6h9.2" fill="none" stroke="#252423" stroke-width="1.5" stroke-linejoin="miter"/></svg>
<div class="a fl" style="left:1049.3px;top:226.08px;font-weight:normal">Age</div>
<div class="a" style="left:1012px;top:249px;width:12px;height:12px;background:#f2c811;border-radius:2px"></div>
<svg width="12" height="12" style="left:1012px;top:249px" viewBox="0 0 12 12"><path d="M3 6.2l2 2 4-4.2" fill="none" stroke="#323130" stroke-width="1"/></svg>
<svg width="20" height="20" style="left:1027.5px;top:248px" viewBox="0 0 20 20"><rect x="1" y="1.6" width="11.6" height="11.6" fill="#fff" stroke="#1b1a19" stroke-width="1.1"/><rect x="1" y="1.6" width="11.6" height="2.6" fill="#1b1a19"/><path d="M3.6 .2v2.4M10 .2v2.4" stroke="#1b1a19" stroke-width="1.2"/><g fill="#1b1a19"><rect x="2.6" y="5.8" width="2" height="2"/><rect x="5.8" y="5.8" width="2" height="2"/><rect x="9" y="5.8" width="2" height="2"/><rect x="2.6" y="9" width="2" height="2"/><rect x="5.8" y="9" width="2" height="2"/></g><circle cx="12.3" cy="14" r="6" fill="#f2c811" stroke="#f3f2f1" stroke-width=".8"/><path d="M9.8 14l1.8 1.8 3.2-3.4" fill="none" stroke="#1b1a19" stroke-width="1.3"/></svg>
<div class="a fl" style="left:1049.3px;top:250.08px;font-weight:bold">Date</div>
<svg width="14" height="8" style="left:992px;top:251.5px" viewBox="0 0 14 8"><path d="M.5 .8l5.7 5.7 5.7-5.7" fill="none" stroke="#605e5c" stroke-width="1"/></svg>
<div class="a" style="left:1012px;top:273px;width:12px;height:12px;border:1px solid #605e5c;border-radius:2px"></div>
<svg width="12" height="12" style="left:1028px;top:273px" viewBox="0 0 12 12"><path d="M10.6 1.2H1.6l4.4 4.6-4.4 4.6h9.2" fill="none" stroke="#252423" stroke-width="1.5" stroke-linejoin="miter"/></svg>
<div class="a fl" style="left:1049.3px;top:274.08px;font-weight:normal">Day_month</div>
<div class="a" style="left:1012px;top:297px;width:12px;height:12px;border:1px solid #605e5c;border-radius:2px"></div>
<div class="a fl" style="left:1049.3px;top:298.08px;font-weight:normal">Education_level</div>
<div class="a" style="left:1012px;top:321px;width:12px;height:12px;border:1px solid #605e5c;border-radius:2px"></div>
<svg width="12" height="12" style="left:1028px;top:321px" viewBox="0 0 12 12"><path d="M10.6 1.2H1.6l4.4 4.6-4.4 4.6h9.2" fill="none" stroke="#252423" stroke-width="1.5" stroke-linejoin="miter"/></svg>
<div class="a fl" style="left:1049.3px;top:322.08px;font-weight:normal">Feedback</div>
<div class="a" style="left:1012px;top:345px;width:12px;height:12px;border:1px solid #605e5c;border-radius:2px"></div>
<div class="a fl" style="left:1049.3px;top:346.08px;font-weight:normal">Gender</div>
<div class="a" style="left:1012px;top:369px;width:12px;height:12px;border:1px solid #605e5c;border-radius:2px"></div>
<svg width="12" height="12" style="left:1028px;top:369px" viewBox="0 0 12 12"><path d="M10.6 1.2H1.6l4.4 4.6-4.4 4.6h9.2" fill="none" stroke="#252423" stroke-width="1.5" stroke-linejoin="miter"/></svg>
<div class="a fl" style="left:1049.3px;top:370.08px;font-weight:normal">Income</div>
<div class="a" style="left:1012px;top:393px;width:12px;height:12px;border:1px solid #605e5c;border-radius:2px"></div>
<svg width="12" height="12" style="left:1028px;top:393px" viewBox="0 0 12 12"><path d="M10.6 1.2H1.6l4.4 4.6-4.4 4.6h9.2" fill="none" stroke="#252423" stroke-width="1.5" stroke-linejoin="miter"/></svg>
<div class="a fl" style="left:1049.3px;top:394.08px;font-weight:normal">Interest_rate</div>
<div class="a" style="left:1012px;top:417px;width:12px;height:12px;background:#f2c811;border-radius:2px"></div>
<svg width="12" height="12" style="left:1012px;top:417px" viewBox="0 0 12 12"><path d="M3 6.2l2 2 4-4.2" fill="none" stroke="#323130" stroke-width="1"/></svg>
<svg width="12" height="12" style="left:1028px;top:417px" viewBox="0 0 12 12"><path d="M10.6 1.2H1.6l4.4 4.6-4.4 4.6h9.2" fill="none" stroke="#252423" stroke-width="1.5" stroke-linejoin="miter"/></svg>
<div class="a fl" style="left:1049.3px;top:418.08px;font-weight:normal">Loan_disbursed</div>
<div class="a" style="left:1012px;top:441px;width:12px;height:12px;border:1px solid #605e5c;border-radius:2px"></div>
<div class="a fl" style="left:1049.3px;top:442.08px;font-weight:normal">Month</div>
<div class="a" style="left:1012px;top:465px;width:12px;height:12px;border:1px solid #605e5c;border-radius:2px"></div>
<svg width="14" height="16" style="left:1027px;top:464px" viewBox="0 0 14 16"><rect x="1.8" y="1.8" width="4.6" height="3.3" rx="1" fill="#f5d96a" stroke="#1b1a19" stroke-width="1.1"/><rect x="7.4" y="5.8" width="4.8" height="3.3" rx="1" fill="#f5d96a" stroke="#1b1a19" stroke-width="1.1"/><rect x="7.4" y="10.8" width="4.8" height="3.3" rx="1" fill="#f5d96a" stroke="#1b1a19" stroke-width="1.1"/><path d="M3.2 7.5h2.6M4.5 6.2v2.6M3.2 12.5h2.6M4.5 11.2v2.6" stroke="#1b1a19" stroke-width="1.1"/></svg>
<div class="a fl" style="left:1049.3px;top:466.08px;font-weight:normal">Month Hierarchy</div>
<svg width="14" height="8" style="left:992px;top:467.5px" viewBox="0 0 14 8"><path d="M.5 .8l5.7 5.7 5.7-5.7" fill="none" stroke="#605e5c" stroke-width="1"/></svg>
<div class="a" style="left:1012px;top:489px;width:12px;height:12px;border:1px solid #605e5c;border-radius:2px"></div>
<svg width="12" height="12" style="left:1028px;top:489px" viewBox="0 0 12 12"><path d="M10.6 1.2H1.6l4.4 4.6-4.4 4.6h9.2" fill="none" stroke="#252423" stroke-width="1.5" stroke-linejoin="miter"/></svg>
<div class="a fl" style="left:1049.3px;top:490.08px;font-weight:normal">Outstanding_debt</div>
<div class="a" style="left:1012px;top:513px;width:12px;height:12px;border:1px solid #605e5c;border-radius:2px"></div>
<svg width="12" height="12" style="left:1028px;top:513px" viewBox="0 0 12 12"><path d="M10.6 1.2H1.6l4.4 4.6-4.4 4.6h9.2" fill="none" stroke="#252423" stroke-width="1.5" stroke-linejoin="miter"/></svg>
<div class="a fl" style="left:1049.3px;top:514.08px;font-weight:normal">Promo_Campaign</div>
<div class="a" style="left:1012px;top:537px;width:12px;height:12px;background:#f2c811;border-radius:2px"></div>
<svg width="12" height="12" style="left:1012px;top:537px" viewBox="0 0 12 12"><path d="M3 6.2l2 2 4-4.2" fill="none" stroke="#323130" stroke-width="1"/></svg>
<div class="a fl" style="left:1049.3px;top:538.08px;font-weight:normal">Purpose</div>
<div class="a" style="left:1012px;top:561px;width:12px;height:12px;border:1px solid #605e5c;border-radius:2px"></div>
<svg width="12" height="12" style="left:1028px;top:561px" viewBox="0 0 12 12"><path d="M10.6 1.2H1.6l4.4 4.6-4.4 4.6h9.2" fill="none" stroke="#252423" stroke-width="1.5" stroke-linejoin="miter"/></svg>
<div class="a fl" style="left:1049.3px;top:562.08px;font-weight:normal">Quarter</div>
<div class="a" style="left:1012px;top:585px;width:12px;height:12px;border:1px solid #605e5c;border-radius:2px"></div>
<div class="a fl" style="left:1049.3px;top:586.08px;font-weight:normal">Weekday</div>
<div class="a" style="left:1012px;top:609px;width:12px;height:12px;border:1px solid #605e5c;border-radius:2px"></div>
<svg width="14" height="16" style="left:1027px;top:608px" viewBox="0 0 14 16"><rect x="1.8" y="1.8" width="4.6" height="3.3" rx="1" fill="#f5d96a" stroke="#1b1a19" stroke-width="1.1"/><rect x="7.4" y="5.8" width="4.8" height="3.3" rx="1" fill="#f5d96a" stroke="#1b1a19" stroke-width="1.1"/><rect x="7.4" y="10.8" width="4.8" height="3.3" rx="1" fill="#f5d96a" stroke="#1b1a19" stroke-width="1.1"/><path d="M3.2 7.5h2.6M4.5 6.2v2.6M3.2 12.5h2.6M4.5 11.2v2.6" stroke="#1b1a19" stroke-width="1.1"/></svg>
<div class="a fl" style="left:1049.3px;top:610.08px;font-weight:normal">Weekday Hierarchy</div>
<svg width="14" height="8" style="left:992px;top:612px" viewBox="0 0 14 8"><path d="M.5 6.5l5.7-5.7 5.7 5.7" fill="none" stroke="#605e5c" stroke-width="1"/></svg>
<div class="a" style="left:1020px;top:633px;width:12px;height:12px;border:1px solid #605e5c;border-radius:2px"></div>
<div class="a fl" style="left:1057.3px;top:634.08px;font-weight:normal">Weekday</div>
<div class="a" style="left:1020px;top:656px;width:12px;height:3px;border:1px solid #605e5c;border-bottom:none;border-radius:2px 2px 0 0"></div>
<div class="a" style="left:774px;top:346px;width:224px;height:260px;border:5px solid #3e44c8"></div>
<!-- ===== bottom ===== -->
<div class="a" style="left:0;top:623px;width:75px;height:35px;background:#fff;border-right:1px solid #d2d0ce"></div>
<div class="a" style="left:0;top:656px;width:75px;height:2px;background:#f2c811"></div>
<div class="a" style="left:20.5px;top:635.3px;font-size:11.2px;color:#252423">Page 1</div>
<div class="a" style="left:76px;top:625px;width:39px;height:32px;background:#f2c811"></div>
<svg width="20" height="20" style="left:85px;top:631px" viewBox="0 0 20 20"><path d="M10.4 4.6v11.6M4.6 10.4h11.6" stroke="#6b6555" stroke-width="2.6"/></svg>
<div class="a" style="left:0;top:658px;width:1198px;height:1px;background:#e1dfdd"></div>

</body></html>
